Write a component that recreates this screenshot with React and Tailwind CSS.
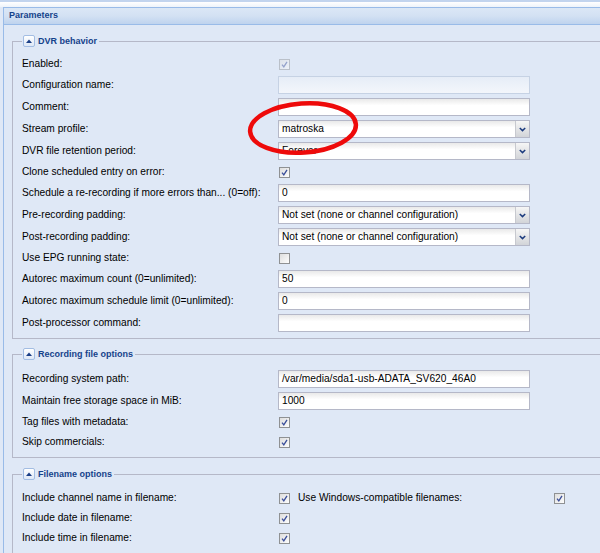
import React from 'react';

const font = { fontFamily: '"Liberation Sans", Arial, sans-serif' };

function Check({ checked = true, disabled = false }) {
  return (
    <svg width="11" height="11" viewBox="0 0 11 11" className={disabled ? 'opacity-45' : ''}>
      <defs>
        <linearGradient id="cbg" x1="0" y1="0" x2="1" y2="1">
          <stop offset="0" stopColor="#dcdcdc" />
          <stop offset="1" stopColor="#ffffff" />
        </linearGradient>
      </defs>
      <rect x="0.5" y="0.5" width="10" height="10" fill="url(#cbg)" stroke="#8f9193" />
      {checked && (
        <path d="M3 5.6 L4.8 7.8 L8 2.8" fill="none" stroke="#3b4f9a" strokeWidth="1.3" />
      )}
    </svg>
  );
}

function TextField({ value = '', disabled = false }) {
  return (
    <div
      className={`h-[18px] w-[252px] border pl-[3px] flex items-center text-[10.2px] text-black ${
        disabled
          ? 'border-[#c6d2e4] bg-linear-to-b from-[#e6edf7] to-[#f3f6fb]'
          : 'border-[#b5b8c8] bg-linear-to-b from-[#e9e9e9] to-white to-40%'
      }`}
    >
      {value}
    </div>
  );
}

function Select({ value }) {
  return (
    <div className="h-[18px] w-[252px] border border-[#b5b8c8] flex items-stretch bg-linear-to-b from-[#e9e9e9] to-white to-40%">
      <div className="flex-1 pl-[3px] flex items-center text-[10.2px] text-black truncate">{value}</div>
      <div className="w-[14px] border-l border-[#c7c9cf] bg-linear-to-b from-[#f6f6f6] to-[#d2d4d8] flex items-center justify-center">
        <svg width="7" height="5" viewBox="0 0 7 5">
          <path d="M0.8 1 L3.5 3.6 L6.2 1" fill="none" stroke="#1c3b7e" strokeWidth="1.5" />
        </svg>
      </div>
    </div>
  );
}

function Row({ label, children, check }) {
  return (
    <div className={`flex items-center ${check ? 'h-[16px]' : 'h-[18px]'}`}>
      <div className="w-[256px] shrink-0 text-[10.2px] text-black whitespace-nowrap">{label}</div>
      <div className="flex items-center">{children}</div>
    </div>
  );
}

function CheckCell(props) {
  return (
    <div className="pl-[1px] flex items-center">
      <Check {...props} />
    </div>
  );
}

function Section({ title, children, className }) {
  return (
    <fieldset className={`w-[640px] border border-[#b5b8c8] pl-[9px] ${className}`}>
      <legend className="flex items-center pl-[1px] pr-[2px]">
        <span className="w-[12px] h-[12px] rounded-[2px] border border-[#a3bde3] bg-linear-to-b from-white to-[#dfe8f6] flex items-center justify-center">
          <svg width="6" height="4" viewBox="0 0 6 4">
            <path d="M0 4 L3 0.5 L6 4 Z" fill="#1b3f87" />
          </svg>
        </span>
        <span className="ml-[3px] text-[9px] font-bold text-[#15428b] leading-[12px]">{title}</span>
      </legend>
      <div className="flex flex-col gap-[4px]">{children}</div>
    </fieldset>
  );
}

export default function App() {
  return (
    <div className="relative w-[600px] h-[553px] overflow-hidden bg-[#dfe8f6]" style={font}>
      <div className="h-[2px] bg-[#c2d4ee]" />
      <div className="h-[5px] bg-linear-to-b from-white to-[#eef3fa]" />
      <div className="ml-[3px] w-[700px] border-l border-[#99bbe8]">
        <div className="h-[18px] border-y border-[#99bbe8] bg-linear-to-b from-[#dbe7f6] via-[#d3e1f3] to-[#bfd3ee] pl-[5px] flex items-center">
          <span className="text-[9px] font-bold text-[#15428b]">Parameters</span>
        </div>
        <div className="pl-[8px] pt-[10px] pb-[20px]">
          <Section title="DVR behavior" className="pt-[9px] pb-[6px] mb-[9px]">
            <Row label="Enabled:" check><CheckCell disabled /></Row>
            <Row label="Configuration name:"><TextField disabled /></Row>
            <Row label="Comment:"><TextField /></Row>
            <Row label="Stream profile:"><Select value="matroska" /></Row>
            <Row label="DVR file retention period:"><Select value="Forever" /></Row>
            <Row label="Clone scheduled entry on error:" check><CheckCell /></Row>
            <Row label="Schedule a re-recording if more errors than... (0=off):"><TextField value="0" /></Row>
            <Row label="Pre-recording padding:"><Select value="Not set (none or channel configuration)" /></Row>
            <Row label="Post-recording padding:"><Select value="Not set (none or channel configuration)" /></Row>
            <Row label="Use EPG running state:" check><CheckCell checked={false} /></Row>
            <Row label="Autorec maximum count (0=unlimited):"><TextField value="50" /></Row>
            <Row label="Autorec maximum schedule limit (0=unlimited):"><TextField value="0" /></Row>
            <Row label="Post-processor command:"><TextField /></Row>
          </Section>

          <Section title="Recording file options" className="pt-[10px] pb-[7px] mb-[10px]">
            <Row label="Recording system path:"><TextField value="/var/media/sda1-usb-ADATA_SV620_46A0" /></Row>
            <Row label="Maintain free storage space in MiB:"><TextField value="1000" /></Row>
            <Row label="Tag files with metadata:" check><CheckCell /></Row>
            <Row label="Skip commercials:" check><CheckCell /></Row>
          </Section>

          <Section title="Filename options" className="pt-[10px] pb-[7px]">
            <div className="flex items-center h-[16px]">
              <div className="w-[256px] shrink-0 text-[10.2px] text-black">Include channel name in filename:</div>
              <div className="w-[20px] shrink-0"><CheckCell /></div>
              <div className="w-[255px] shrink-0 text-[10.2px] text-black">Use Windows-compatible filenames:</div>
              <CheckCell />
            </div>
            <Row label="Include date in filename:" check><CheckCell /></Row>
            <Row label="Include time in filename:" check><CheckCell /></Row>
          </Section>
        </div>
      </div>

      {/* red hand-drawn annotation around the stream profile */}
      <svg className="absolute left-0 top-0 pointer-events-none" width="600" height="553">
        <ellipse
          cx="303"
          cy="128"
          rx="53"
          ry="24.5"
          fill="none"
          stroke="#ee0a0a"
          strokeWidth="4.5"
          transform="rotate(-4 303 128)"
        />
      </svg>
    </div>
  );
}
